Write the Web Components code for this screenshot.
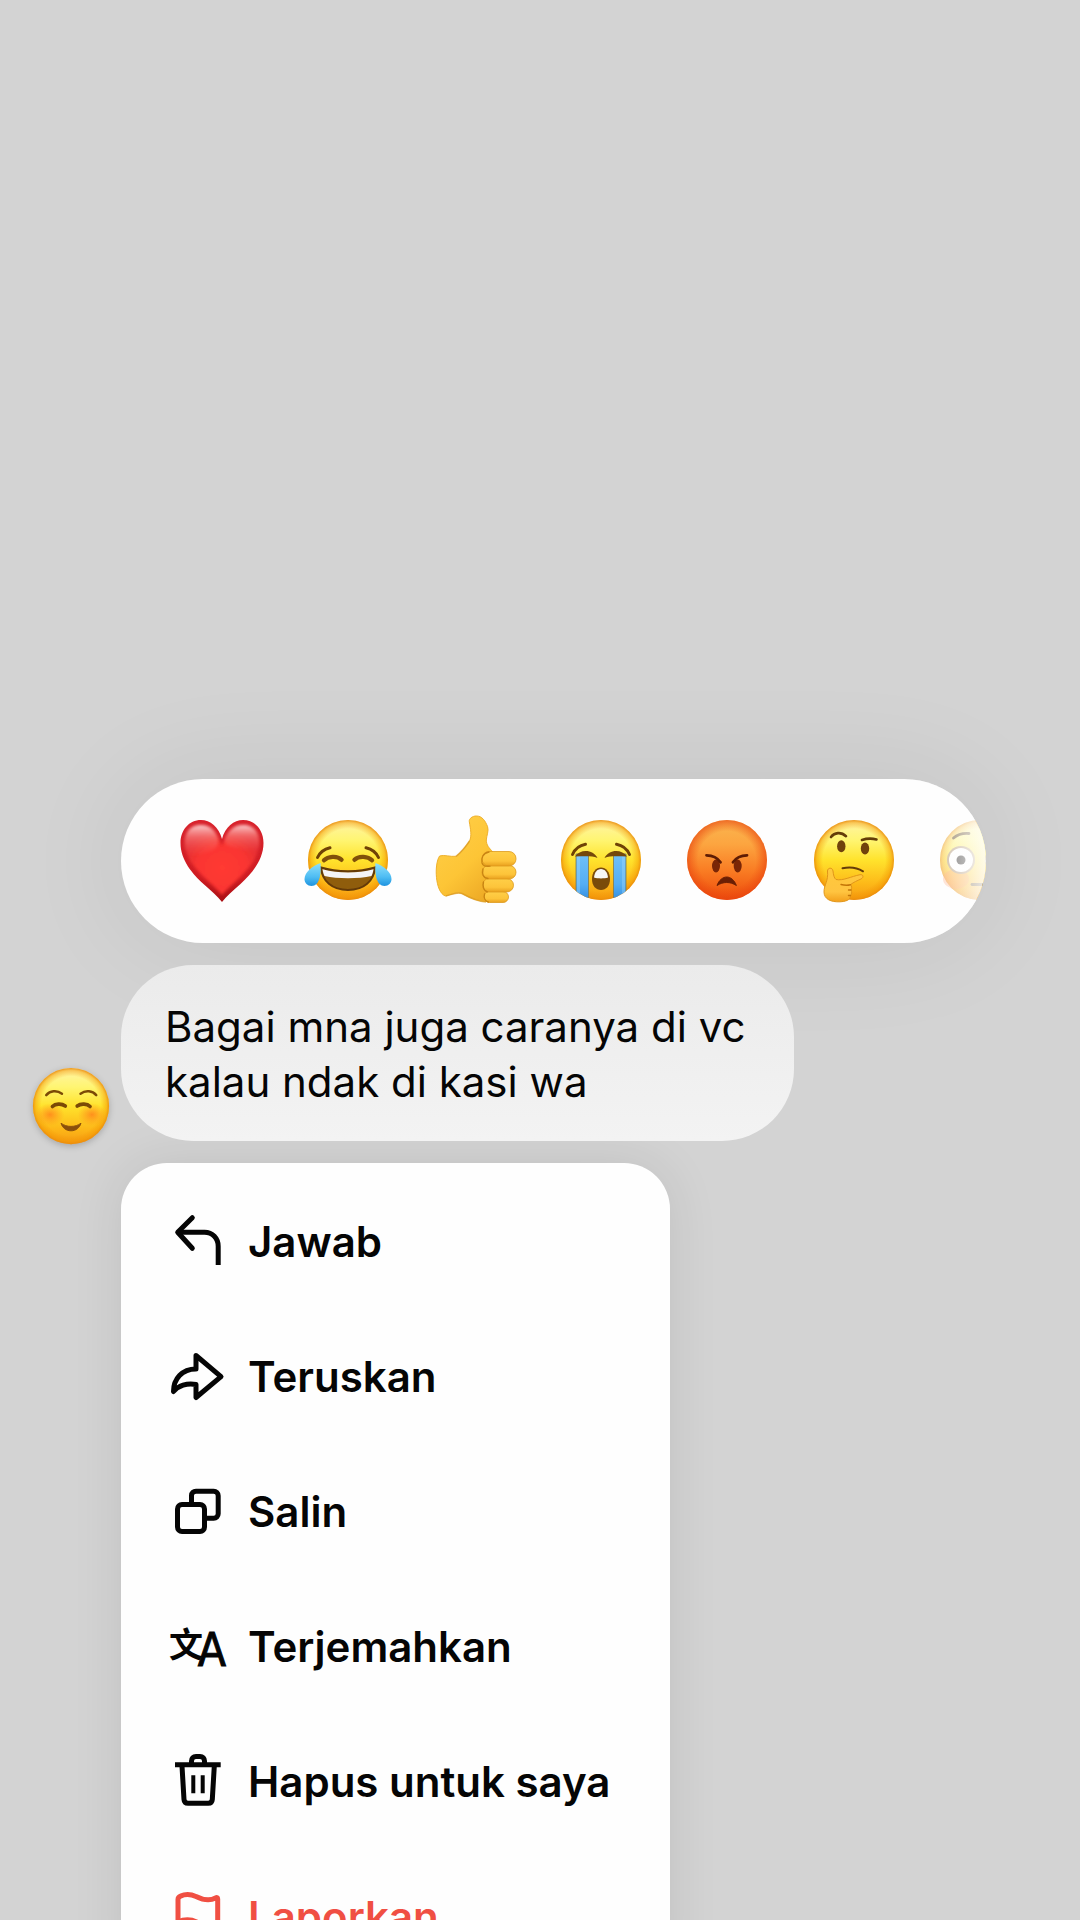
<!DOCTYPE html>
<html lang="id">
<head>
<meta charset="utf-8">
<meta name="viewport" content="width=device-width, initial-scale=1">
<title>Pesan</title>
<style>
  html {
    height: 100%;
  }
  body {
    margin: 0;
    height: 100%;
    overflow: hidden;
    background: #d3d3d3;
    color: #050505;
    font-family: Inter, "Liberation Sans", sans-serif;
  }
</style>
</head>
<body>
<message-overlay>
  <reaction-bar slot="reactions"></reaction-bar>
  <emoji-art slot="avatar" name="smile"></emoji-art>
  <message-bubble slot="message">Bagai mna juga caranya di vc kalau ndak di kasi wa</message-bubble>
  <action-menu slot="menu">
    <action-item icon="reply">Jawab</action-item>
    <action-item icon="forward">Teruskan</action-item>
    <action-item icon="copy">Salin</action-item>
    <action-item icon="translate">Terjemahkan</action-item>
    <action-item icon="trash">Hapus untuk saya</action-item>
    <action-item icon="flag" danger>Laporkan</action-item>
  </action-menu>
</message-overlay>

<script>
const yellowFace = `
  <defs>
    <linearGradient id="skin" x1="0" y1="0" x2="0" y2="1">
      <stop offset="0" stop-color="#fff3a8"/>
      <stop offset=".25" stop-color="#fff572"/>
      <stop offset=".5" stop-color="#ffe32c"/>
      <stop offset=".8" stop-color="#fdb818"/>
      <stop offset="1" stop-color="#f59a13"/>
    </linearGradient>
    <radialGradient id="rim">
      <stop offset=".78" stop-color="#f29200" stop-opacity="0"/>
      <stop offset=".93" stop-color="#f29200" stop-opacity=".45"/>
      <stop offset="1" stop-color="#e88a10" stop-opacity=".9"/>
    </radialGradient>
  </defs>
  <circle cx="42" cy="41" r="40" fill="url(#skin)"/>
  <circle cx="42" cy="41" r="40" fill="url(#rim)"/>`

const emojis = {
  heart: {
    label: "Suka",
    art: `
      <defs>
        <linearGradient id="base" x1="0" y1="0" x2="0" y2="1">
          <stop offset="0" stop-color="#d8222c"/>
          <stop offset=".7" stop-color="#cf1c22"/>
          <stop offset="1" stop-color="#a80f14"/>
        </linearGradient>
        <radialGradient id="glow" cx=".5" cy=".62" r=".55">
          <stop offset="0" stop-color="#ff3a31"/>
          <stop offset=".6" stop-color="#fa3530"/>
          <stop offset="1" stop-color="#f2383a" stop-opacity=".6"/>
        </radialGradient>
        <linearGradient id="shine" x1="0" y1="0" x2="0" y2="1">
          <stop offset="0" stop-color="#fff" stop-opacity=".75"/>
          <stop offset=".4" stop-color="#ffb0a8" stop-opacity=".4"/>
          <stop offset="1" stop-color="#ff6a60" stop-opacity="0"/>
        </linearGradient>
        <filter id="soft" x="-.2" y="-.2" width="1.4" height="1.4"><feGaussianBlur stdDeviation="1.5"/></filter>
      </defs>
      <path fill="url(#base)" d="M42 20C39 8 30 1 21 1 9 1 .5 11 .5 24c0 17 12 31 23 41 8 7 14 12 18.500 18 4.500-6 10.500-11 18.500-18 11-10 23-24 23-41C83.500 11 75 1 63 1c-9 0-18 7-21 19z"/>
      <path fill="url(#glow)" filter="url(#soft)" d="M42 27C38 13 30 6 21 6 11 6 5 13 5 24c0 15 11 27 22 37 7 7 11 10 15 15 4-5 8-8 15-15 11-10 22-22 22-37C79 13 73 6 63 6c-9 0-17 7-21 21z"/>
      <path fill="url(#shine)" filter="url(#soft)" d="M5 30C3 14 10 6 21 6c9 0 15 6 17 14 1 8-4 12-12 14S9 42 5 30z"/>
      <path fill="url(#shine)" filter="url(#soft)" d="M79 28C81 14 74 6 63 6c-9 0-15 6-18 14-1 6 4 8 12 9s18 10 22-1z"/>`
  },
  joy: {
    label: "Tertawa",
    art: yellowFace + `
      <defs>
        <linearGradient id="tear" x1="0" y1="0" x2="0" y2="1">
          <stop offset="0" stop-color="#8fe0fb"/>
          <stop offset=".6" stop-color="#4fbdf3"/>
          <stop offset="1" stop-color="#1d93e0"/>
        </linearGradient>
      </defs>
      <g fill="none" stroke="#6f4206" stroke-width="3" stroke-linecap="round">
        <path d="M11.500 38.500C14 33 18 30 24 28.700"/>
        <path d="M72.500 38.500C70 33 66 30 60 28.700"/>
      </g>
      <g fill="none" stroke="#80500a" stroke-width="4.400" stroke-linecap="round">
        <path d="M18 41.300c4-4 13-5 17.500-.5"/>
        <path d="M66 41.300c-4-4-13-5-17.500-.5"/>
      </g>
      <path fill="#8f5d0c" stroke="#643a08" stroke-width="2" d="M15 48.500c16 5 38 5 54 0C68 62 58 71 42 71S16 62 15 48.500z"/>
      <path fill="#f4f4f6" d="M16.500 50.300c16 4.400 35 4.400 51 0-.5 3-1 4.700-2 6.700-13 3-34 3-47 0-1-2-1.500-3.700-2-6.700z"/>
      <path fill="url(#tear)" d="M14.500 44c-8 3-16 9-16 16 0 4 3 7 7 7 8 0 10-12 9-23z"/>
      <path fill="url(#tear)" d="M69.500 44c8 3 16 9 16 16 0 4-3 7-7 7-8 0-10-12-9-23z"/>`
  },
  thumb: {
    label: "Jempol",
    art: `
      <defs>
        <linearGradient id="hand" x1="0" y1="0" x2=".7" y2="1">
          <stop offset="0" stop-color="#ffd04a"/>
          <stop offset=".6" stop-color="#fdc536"/>
          <stop offset="1" stop-color="#eda925"/>
        </linearGradient>
        <linearGradient id="finger" x1="0" y1="0" x2="0" y2="1">
          <stop offset="0" stop-color="#ffcf48"/>
          <stop offset=".65" stop-color="#fdc43a"/>
          <stop offset="1" stop-color="#e9a01e"/>
        </linearGradient>
      </defs>
      <path fill="url(#hand)" stroke="#eeb02c" stroke-width="1" d="M6.600 37c5-1.500 10 1 16.700.3C29 33 33 27 36.500 22c2.500-5 1-12-.2-19.300-.5-3 3-5.700 7-5.700 6 0 9 5 11.300 10.700 1.400 4-1 9-1.300 13.300C53.300 26 56 29 60 33l10 20-10 29.500c-13 1-22-3-31-8-5-2-10 1-16.700 2.500C2 73 1 45 6.600 37z"/>
      <path fill="none" stroke="#dc9a20" stroke-width="1.500" opacity=".7" d="M23 37.300c5-4 10-10 13.500-15.300M13 77c6-1.500 11-4.500 16-2.500 9 5 16 8 24 8.500"/>
      <g fill="url(#finger)" stroke="#dd9b1d" stroke-width=".8">
        <rect x="51" y="72.500" width="24.500" height="11" rx="5.500"/>
        <rect x="49.500" y="59.500" width="31" height="13.500" rx="6.700"/>
        <rect x="49" y="46.500" width="34" height="13.500" rx="6.700"/>
        <rect x="49" y="32.500" width="34" height="14.500" rx="7"/>
      </g>
      <path fill="none" stroke="#c98412" stroke-width="1.300" stroke-linecap="round" d="M56 33c-6 1-8 6-7 11 1 3 3 3.500 8 3.200M50 50c-1 5 0 9 5 9.500M50.500 63c-1 4 0 9 4 9.800M51.500 75c-1 4 1 7 4 8"/>`
  },
  cry: {
    label: "Menangis",
    art: yellowFace + `
      <defs>
        <linearGradient id="stream" x1="0" y1="0" x2="0" y2="1">
          <stop offset="0" stop-color="#6fc0f8"/>
          <stop offset=".6" stop-color="#55aef3"/>
          <stop offset="1" stop-color="#2d86da"/>
        </linearGradient>
        <clipPath id="head"><circle cx="42" cy="41" r="40"/></clipPath>
      </defs>
      <g clip-path="url(#head)">
        <path fill="url(#stream)" stroke="#7c7a50" stroke-width=".8" d="M17 35h12.500v50H17zM54.500 35H67v50H54.500z"/>
        <path fill="#a5dcff" opacity=".35" d="M18 37h3v40h-3zM63 37h3v40h-3z"/>
      </g>
      <g fill="none" stroke="#6f4206" stroke-width="3" stroke-linecap="round">
        <path d="M13.500 35.500C16 30 20 26.500 26.500 25.300"/>
        <path d="M70.500 35.500C68 30 64 26.500 57.500 25.300"/>
      </g>
      <path fill="#75480a" d="M16 37.500C21 30 34 30 38.500 39c-6-2.500-14-1.500-22.500-1.500zM68 37.500C63 30 50 30 45.500 39c6-2.500 14-1.500 22.500-1.500z"/>
      <path fill="#7a4a0a" d="M33 60c0-7 4-11.500 9-11.500S51 53 51 60s-4 11-9 11-9-4-9-11z"/>
      <path fill="#f6f6f6" d="M35 58.500c.5-5 3-8.500 7-8.500s6.500 3.500 7 8.500c-4 1.200-10 1.200-14 0z"/>`
  },
  angry: {
    label: "Marah",
    art: `
      <defs>
        <linearGradient id="skin" x1="0" y1="0" x2="0" y2="1">
          <stop offset="0" stop-color="#fab650"/>
          <stop offset=".3" stop-color="#fca540"/>
          <stop offset=".65" stop-color="#f97a22"/>
          <stop offset="1" stop-color="#ec4c0c"/>
        </linearGradient>
        <radialGradient id="rim">
          <stop offset=".72" stop-color="#ee4a10" stop-opacity="0"/>
          <stop offset="1" stop-color="#e8430f" stop-opacity=".65"/>
        </radialGradient>
      </defs>
      <circle cx="42" cy="41" r="40" fill="url(#skin)"/>
      <circle cx="42" cy="41" r="40" fill="url(#rim)"/>
      <g fill="#7a2606">
        <ellipse cx="31" cy="47" rx="4" ry="6.500"/>
        <ellipse cx="52.700" cy="47" rx="4" ry="6.500"/>
      </g>
      <g fill="none" stroke="#5e1c04" stroke-width="2.800" stroke-linecap="round">
        <path d="M21.500 36.300c7 0 11 2.500 14 7"/>
        <path d="M62 36.300c-7 0-11 2.500-14 7"/>
      </g>
      <path fill="#6b1f04" stroke="#6b1f04" stroke-linejoin="round" d="M32 66.500c2-5.500 6-8.500 9.700-8.500s7.700 3 9.700 8.500c-6-4-13.400-4-19.400 0z"/>`
  },
  think: {
    label: "Berpikir",
    art: yellowFace + `
      <defs>
        <linearGradient id="palm" x1="0" y1="0" x2="0" y2="1">
          <stop offset="0" stop-color="#ffc93c"/>
          <stop offset=".7" stop-color="#ffc440"/>
          <stop offset="1" stop-color="#f3a01c"/>
        </linearGradient>
      </defs>
      <g fill="#70420c">
        <ellipse cx="29.300" cy="27.300" rx="4.200" ry="6"/>
        <ellipse cx="53" cy="29.500" rx="4.200" ry="6"/>
      </g>
      <g fill="none" stroke="#643c08" stroke-width="2.600" stroke-linecap="round">
        <path d="M19 18c3.500-4.500 10-5.500 15-.8"/>
        <path d="M50 21c5-1.700 10-1.700 14.500-.5"/>
        <path stroke-width="2" d="M30.500 49.300c7-1.500 14-1 20.500 3"/>
      </g>
      <path fill="url(#palm)" stroke="#e0951a" stroke-width="1" stroke-linejoin="round" d="M15.500 52c0-3.500 5-4 5.500 0 .5 4 1 7 3 8.500 7 1.500 15-3 24-4.800 3.500-.5 4 2.800 1 4.300-4 1.800-7 3-10.500 5.600 1.500 1.500 1.500 3.500.5 5.400 1 2 .8 4-.5 5.500 0 5-5.500 6-10.500 6.300-9 .4-16-2.500-16-10 0-7 4.500-10.500 3.500-20.800z"/>
      <path fill="none" stroke="#c47608" stroke-width="1.400" stroke-linecap="round" d="M29 65.500c4 1 6.500 1 9.500.2M36.500 71h2.500M36.500 76.500h2"/>`
  },
  flushed: {
    label: "Kaget",
    art: yellowFace + `
      <ellipse cx="18" cy="60" rx="13" ry="10" fill="#ff7a3a" opacity=".4"/>
      <circle cx="23" cy="41" r="14" fill="#a98d6a"/>
      <circle cx="23" cy="41" r="12" fill="#fff"/>
      <circle cx="61" cy="41" r="14" fill="#a98d6a"/>
      <circle cx="61" cy="41" r="12" fill="#fff"/>
      <g fill="#0c0806">
        <circle cx="23" cy="41" r="4.500"/>
        <circle cx="61" cy="41" r="4.500"/>
      </g>
      <g fill="none" stroke="#4f3408" stroke-width="2.800" stroke-linecap="round">
        <path d="M15.500 19c4-3.500 9-5 15.500-4.500"/>
        <path d="M68.500 19c-4-3.500-9-5-15.500-4.500"/>
        <path d="M34 65.500h16"/>
      </g>`
  },
  smile: {
    label: "Foto profil",
    art: yellowFace + `
      <defs>
        <radialGradient id="blush">
          <stop offset="0" stop-color="#ff7a1a" stop-opacity=".75"/>
          <stop offset="1" stop-color="#ff8a1a" stop-opacity="0"/>
        </radialGradient>
      </defs>
      <ellipse cx="20" cy="50" rx="15" ry="12" fill="url(#blush)"/>
      <ellipse cx="64" cy="50" rx="15" ry="12" fill="url(#blush)"/>
      <g fill="none" stroke="#7b4a06" stroke-linecap="round">
        <path stroke-width="2.600" d="M16 29.500c4-4.500 11-5.500 16.500-1.500"/>
        <path stroke-width="2.600" d="M68.500 29.500c-4-4.500-11-5.500-16.500-1.500"/>
        <path stroke-width="3.800" d="M22.500 41.500c3-3 9.500-3.500 13.500-.5"/>
        <path stroke-width="3.800" d="M62 41.500c-3-3-9.500-3.500-13.500-.5"/>
      </g>
      <path fill="#8a4f0c" stroke="#8a4f0c" stroke-linejoin="round" d="M31.500 59c6 4.500 15 4.500 21 0C51 64 47 67 42 67s-9-3-10.500-8z"/>`
  }
}

const icons = {
  reply: `
    <path d="M23.300 3.700 8.700 18.300l14.600 16" stroke-linejoin="round" stroke-linecap="round"/>
    <path d="M9 18.300h26.500c8 0 13.700 6 13.700 14V51"/>`,
  forward: `
    <path stroke-linejoin="round" d="M27 6.500 52 27.700 27 48.500V35.500C18 33.500 9 37 4.500 42.500 4.500 30 13 20 27 20z"/>`,
  copy: `
    <rect x="8.500" y="20.500" width="27" height="27" rx="4.500"/>
    <path d="M22.500 20v-8.500c0-2.500 2-4.300 4.500-4.300h17.700c2.500 0 4.500 2 4.500 4.500v18c0 2.500-2 4.500-4.500 4.500H36"/>`,
  translate: `
    <text x="17" y="38" font-size="34" font-weight="700" font-family="'Noto Sans CJK SC', sans-serif">文</text>
    <text x="43" y="47" font-size="46" font-weight="400" stroke="currentColor" style="stroke: currentColor; stroke-width: 1" font-family="'DejaVu Sans Condensed', 'DejaVu Sans', sans-serif">A</text>`,
  trash: `
    <path d="M6 10.700h45.700M22.500 10V7c0-2.700 1.700-4.500 4.500-4.500h4c2.800 0 4.500 1.800 4.500 4.500v3"/>
    <path d="m13 12 2 33.500c.2 2.500 1.500 3.700 4 3.700h20.300c2.500 0 3.800-1.200 4-3.700l2-33.500"/>
    <path stroke-width="4" d="M24.300 21.300v18M33.700 21.300v18"/>`,
  flag: `
    <path stroke-linejoin="round" d="M9 57V10.500c0-1.800.8-2.800 2.500-3.400 5.500-2.400 10-2 15.500.4 7 3.500 13 5 19.500 1.500 1.500-.8 2.200-.2 2.200 1V33c-8 5-14 3.500-21 0-6.500-3-12-3-18.700 0"/>`
}

class EmojiArt extends HTMLElement {
  #shadow;

  constructor() {
    super();
    this.#shadow = this.attachShadow({ mode: "open" });
  }

  connectedCallback() {
    let emoji = emojis[this.getAttribute("name")]
    this.#shadow.innerHTML = `
      <style>
        :host {
          display: block;
        }
        svg {
          display: block;
          width: 100%;
          overflow: visible;
        }
      </style>
      <svg viewBox="0 0 84 84" role="img" aria-label="${emoji.label}">${emoji.art}</svg>
    `;
  }
}
customElements.define("emoji-art", EmojiArt);

class ReactionBar extends HTMLElement {
  #shadow;

  constructor() {
    super();
    this.#shadow = this.attachShadow({ mode: "open" });
    this.render();
  }

  render() {
    this.#shadow.innerHTML = `
      <style>
        :host {
          display: block;
          position: relative;
          overflow: hidden;
          border-radius: 84px;
          background: #fefefe;
          box-shadow: 0 0 110px rgba(0, 0, 0, .08);
        }
        .list {
          display: flex;
          justify-content: space-between;
          margin: 0 -36px 0 59px;
          padding: 40px 0;
        }
        button {
          flex: none;
          width: 84px;
          margin: 0;
          padding: 0;
          border: 0;
          background: none;
        }
        .fade {
          position: absolute;
          inset: 0 0 0 auto;
          width: 96px;
          background: linear-gradient(to right, rgba(254, 254, 254, 0), rgba(254, 254, 254, .9));
          pointer-events: none;
        }
      </style>
      <div class="list"></div>
      <div class="fade"></div>
    `;
    let list = this.#shadow.querySelector(".list")
    for (let name of ["heart", "joy", "thumb", "cry", "angry", "think", "flushed"]) {
      let button = document.createElement("button")
      button.type = "button"
      let art = document.createElement("emoji-art")
      art.setAttribute("name", name)
      button.appendChild(art)
      list.appendChild(button)
    }
  }
}
customElements.define("reaction-bar", ReactionBar);

class MessageBubble extends HTMLElement {
  constructor() {
    super();
    this.attachShadow({ mode: "open" }).innerHTML = `
      <style>
        :host {
          display: block;
          box-sizing: border-box;
          max-width: 673px;
          padding: 34px 44px 32px;
          border-radius: 72px;
          background: linear-gradient(#ebebeb, #f3f3f3);
          font-size: 42px;
          line-height: 55px;
        }
        p {
          margin: 0;
        }
      </style>
      <p><slot></slot></p>
    `;
  }
}
customElements.define("message-bubble", MessageBubble);

class ActionItem extends HTMLElement {
  #shadow;

  constructor() {
    super();
    this.#shadow = this.attachShadow({ mode: "open" });
  }

  connectedCallback() {
    this.#shadow.innerHTML = `
      <style>
        :host {
          display: block;
          color: #050505;
        }
        :host([danger]) {
          color: #f04f43;
        }
        button {
          display: flex;
          align-items: center;
          gap: 22px;
          width: 100%;
          height: 135px;
          margin: 0;
          padding: 0 48px;
          border: 0;
          background: none;
          color: inherit;
          font: 600 42px/56px Inter, "Liberation Sans", sans-serif;
          text-align: left;
          white-space: nowrap;
        }
        svg {
          flex: none;
          width: 57px;
          height: 57px;
          overflow: visible;
          fill: none;
          stroke: currentColor;
          stroke-width: 5;
        }
        text {
          fill: currentColor;
          stroke: none;
          text-anchor: middle;
        }
        span {
          padding-bottom: 2px;
        }
      </style>
      <button type="button" role="menuitem">
        <svg viewBox="0 0 57 57" aria-hidden="true">${icons[this.getAttribute("icon")]}</svg>
        <span><slot></slot></span>
      </button>
    `;
  }
}
customElements.define("action-item", ActionItem);

class ActionMenu extends HTMLElement {
  constructor() {
    super();
    this.attachShadow({ mode: "open" }).innerHTML = `
      <style>
        :host {
          display: block;
          box-sizing: border-box;
          width: 549px;
          max-width: 100%;
          padding: 12px 0;
          border-radius: 46px;
          background: #fefefe;
          box-shadow: 0 0 52px rgba(0, 0, 0, .09);
        }
      </style>
      <div role="menu"><slot></slot></div>
    `;
  }
}
customElements.define("action-menu", ActionMenu);

class MessageOverlay extends HTMLElement {
  constructor() {
    super();
    this.attachShadow({ mode: "open" }).innerHTML = `
      <style>
        :host {
          display: grid;
          grid-template-columns: 80px minmax(0, 1fr);
          column-gap: 10px;
          row-gap: 22px;
          align-content: start;
          box-sizing: border-box;
          height: 100%;
          overflow: hidden;
          padding: 779px 94px 0 31px;
        }
        .reactions, .message, .menu {
          grid-column: 2;
        }
        .avatar {
          align-self: end;
          margin-bottom: -6px;
          filter: drop-shadow(0 2px 3px rgba(0, 0, 0, .2));
        }
        /* keeps the neighbours' shadows behind the bubble */
        .message {
          display: flex;
          position: relative;
        }
      </style>
      <div class="reactions"><slot name="reactions"></slot></div>
      <div class="avatar"><slot name="avatar"></slot></div>
      <div class="message"><slot name="message"></slot></div>
      <div class="menu"><slot name="menu"></slot></div>
    `;
  }
}
customElements.define("message-overlay", MessageOverlay);
</script>
</body>
</html>
